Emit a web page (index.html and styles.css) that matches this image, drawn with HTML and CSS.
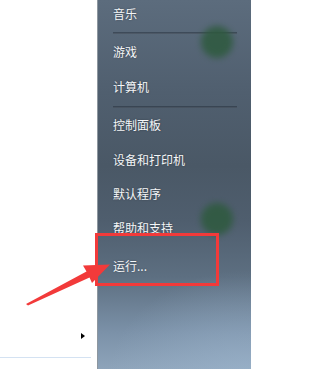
FILE: index.html
```html
<!DOCTYPE html>
<html lang="zh-CN">
<head>
<meta charset="utf-8">
<link rel="stylesheet" href="styles.css">
</head>
<body>
<div class="screen">
  <div class="left-pane">
    <div class="more-row"><span class="more-arrow"></span></div>
    <div class="left-sep"></div>
  </div>
  <div class="divider"></div>
  <div class="right-pane">
    <div class="blob blob-top"></div>
    <div class="blob blob-bottom"></div>
    <div class="item item-first">音乐</div>
    <div class="sep sep-a"></div>
    <div class="item">游戏</div>
    <div class="item item-tall">计算机</div>
    <div class="sep sep-b"></div>
    <div class="item">控制面板</div>
    <div class="item item-mid">设备和打印机</div>
    <div class="item">默认程序</div>
    <div class="item">帮助和支持</div>
    <div class="item item-run">运行...</div>
  </div>
  <div class="highlight-box"></div>
  <svg class="pointer" width="251" height="369" viewBox="0 0 251 369">
    <polygon points="26,304 86.5,271.5 83,265.5 110,264.5 92,283 89.5,277.5 28,305.5" fill="#f23a3a"/>
  </svg>
</div>
</body>
</html>
```
FILE: styles.css
```css
html, body {
  margin: 0;
  padding: 0;
  background: #ffffff;
}
.screen {
  position: relative;
  width: 251px;
  height: 369px;
  display: flex;
  overflow: hidden;
  font-family: "Noto Sans CJK SC", "Noto Sans", sans-serif;
}
.left-pane {
  width: 97px;
  background: #ffffff;
  display: flex;
  flex-direction: column;
  justify-content: flex-end;
}
.more-row {
  height: 7px;
  padding-left: 81px;
  margin-bottom: 17px;
}
.more-arrow {
  display: block;
  width: 0;
  height: 0;
  border-left: 4px solid #000;
  border-top: 3.5px solid transparent;
  border-bottom: 3.5px solid transparent;
}
.left-sep {
  width: 91px;
  height: 1px;
  background: #d4e2f2;
  margin-bottom: 11px;
}
.divider {
  width: 1px;
  background: #8e979f;
}
.right-pane {
  position: relative;
  flex: 1;
  padding-left: 15px;
  background:
    radial-gradient(ellipse 140px 110px at 150px 380px, rgba(160,185,210,0.55), rgba(160,185,210,0) 100%),
    linear-gradient(180deg, #5c6c7d 0%, #505f6f 25%, #4a5866 45%, #4f5e6e 60%, #5d6f81 75%, #7b91a8 90%, #8ea4ba 100%);
  color: #f4f6f8;
  font-size: 12px;
}
.item {
  position: relative;
  height: 34px;
  line-height: 34px;
  white-space: nowrap;
  text-shadow: 0 0 2px rgba(0,0,0,0.35);
}
.item-first {
  height: 28px;
  line-height: 28px;
}
.item-tall {
  height: 36px;
  line-height: 36px;
}
.item-mid {
  height: 35px;
  line-height: 35px;
}
.item-run {
  margin-top: 4px;
}
.sep {
  width: 124px;
  height: 1px;
  background: rgba(30,40,50,0.45);
  border-bottom: 1px solid rgba(255,255,255,0.08);
}
.sep-a {
  margin-top: 4px;
  margin-bottom: 1px;
}
.sep-b {
  margin-top: 1px;
  margin-bottom: 0;
}
.blob {
  position: absolute;
  width: 32px;
  height: 32px;
  border-radius: 50%;
  background: #2e5a3e;
  filter: blur(3px);
  opacity: 0.85;
}
.blob-top {
  left: 103px;
  top: 26px;
}
.blob-bottom {
  left: 103px;
  top: 203px;
}
.highlight-box {
  position: absolute;
  left: 95px;
  top: 233px;
  width: 118px;
  height: 47px;
  border: 3px solid #f23a3a;
}
.pointer {
  position: absolute;
  left: 0;
  top: 0;
  pointer-events: none;
}
```
